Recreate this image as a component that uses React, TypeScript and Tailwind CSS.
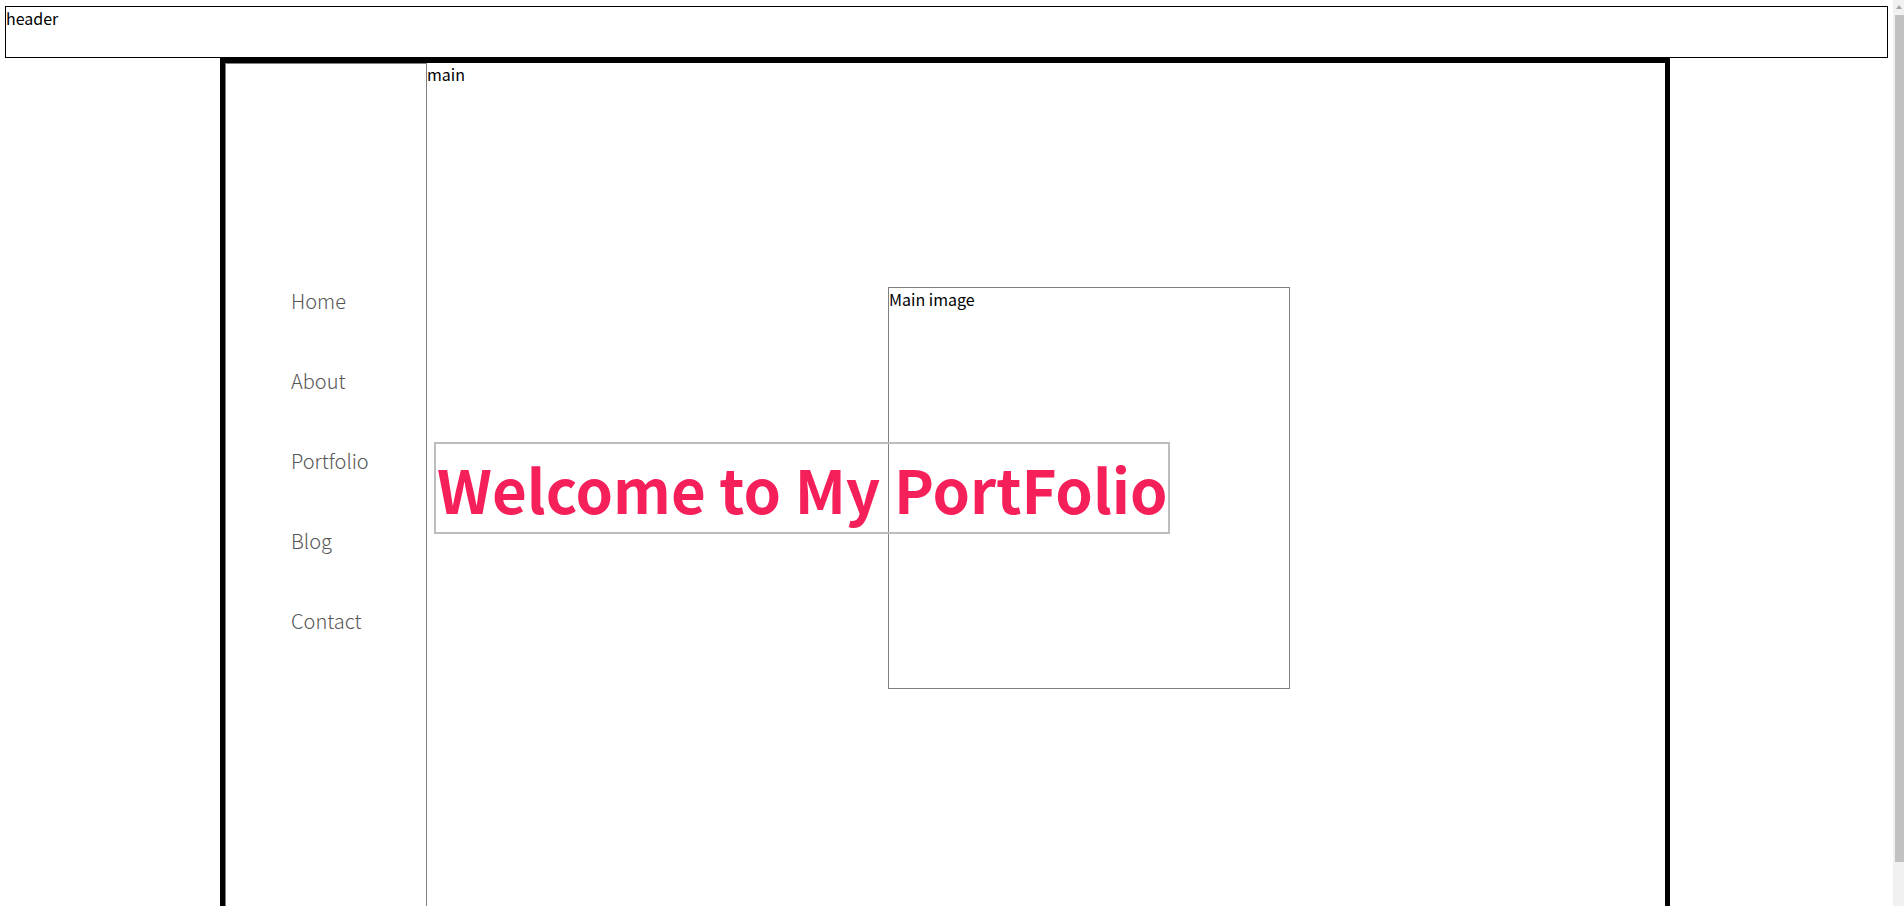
import React from "react";

const menu = ["Home", "About", "Portfolio", "Blog", "Contact"];

const App = () => {
    return (
        <div className="min-h-screen bg-white font-['Noto_Sans_CJK_KR','Noto_Sans',sans-serif] text-black">
            <div className="w-[1893px] pb-[20px]">
                <header className="mx-[5px] mt-[6px] h-[52px] border border-black text-base leading-[1.4]">
                    header
                </header>
                <div className="ml-[220px] flex w-[1450px] border-[5px] border-black">
                    <nav className="w-[202px] shrink-0 border border-[#808080]">
                        <ul className="flex flex-col gap-[46px] pl-[65px] pt-[220px]">
                            {menu.map(item => (
                                <li key={item} className="font-['Noto_Sans_CJK_KR_Light','Noto_Sans_CJK_KR',sans-serif] text-[20px] leading-[34px] font-light text-[#555]">
                                    {item}
                                </li>
                            ))}
                        </ul>
                    </nav>
                    <main className="grid h-[850px] flex-1 items-center">
                        <span className="col-start-1 row-start-1 self-start text-base leading-[1.4]">main</span>
                        <div className="col-start-1 row-start-1 ml-[461px] h-[402px] w-[402px] border border-[#808080] text-base leading-[1.4]">
                            Main image
                        </div>
                        <h1 className="col-start-1 row-start-1 ml-[7px] w-fit border-2 border-[#bdbdbd] pl-[1px] text-[60px] leading-[88px] font-bold text-[#f5205a]">
                            Welcome to My PortFolio
                        </h1>
                    </main>
                </div>
            </div>
            {/* scrollbar strip, as the browser drew it */}
            <div className="fixed right-0 top-0 flex h-screen w-[11px] flex-col items-end bg-[#f1f1f1]">
                <div className="mr-[2px] mt-[5px] h-0 w-0 border-x-[3px] border-b-[4px] border-x-transparent border-b-[#a3a3a3]" />
                <div className="mt-[6px] h-[847px] w-[9px] bg-[#c1c1c1]" />
            </div>
        </div>
    );
};

export default App;
